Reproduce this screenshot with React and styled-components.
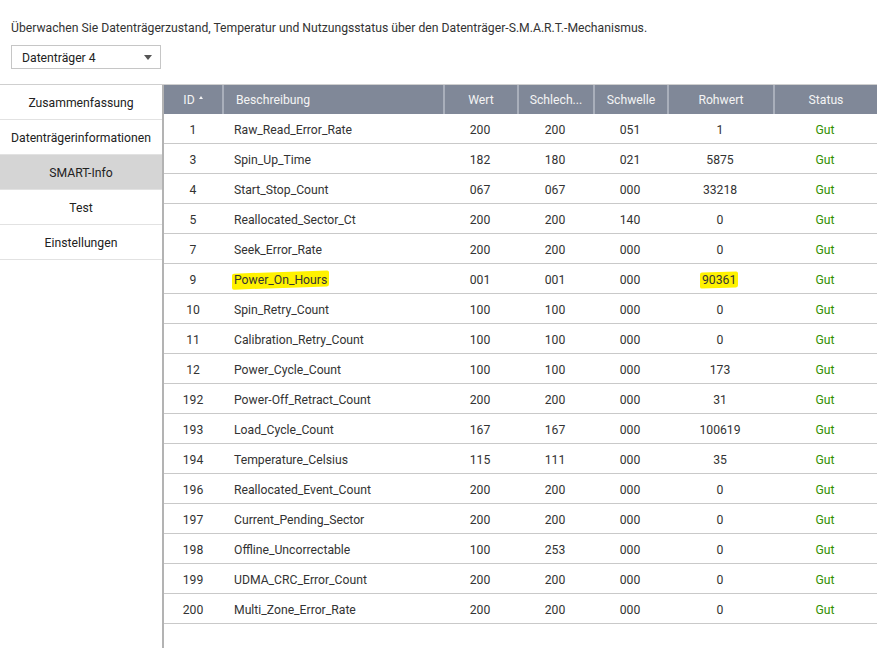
import React from "react";
import styled, { createGlobalStyle } from "styled-components";

const Global = createGlobalStyle`
  html, body { margin: 0; padding: 0; background: #fff; }
  body { font-family: Roboto, "Liberation Sans", sans-serif; font-size: 12.2px; color: #333; }
  * { box-sizing: border-box; }
`;

const Page = styled.div`
  width: 877px;
  height: 648px;
  overflow: hidden;
  display: flex;
  flex-direction: column;
`;

const Intro = styled.div`
  padding: 20px 0 0 11px;
  height: 45px;
  line-height: 16px;
  font-size: 12.2px;
  color: #333;
`;

const Select = styled.div`
  margin-left: 11px;
  width: 150px;
  height: 24px;
  border: 1px solid #c6c6c6;
  display: flex;
  align-items: center;
  justify-content: space-between;
  padding: 1px 8px 0 10px;
  font-size: 12.2px;
  color: #222;
`;

const Caret = styled.span`
  width: 0;
  height: 0;
  border-left: 4px solid transparent;
  border-right: 4px solid transparent;
  border-top: 5px solid #555;
`;

const Body = styled.div`
  margin-top: 15px;
  border-top: 1px solid #cfcfcf;
  display: flex;
  flex: 1;
  min-height: 0;
`;

const Side = styled.div`
  width: 164px;
  border-right: 2px solid #b3b3b3;
  display: flex;
  flex-direction: column;
`;

const SideItem = styled.div`
  height: 35px;
  display: flex;
  align-items: center;
  justify-content: center;
  padding-top: 2px;
  border-bottom: 1px solid #e2e2e2;
  background: ${(p) => (p.$active ? "#d5d5d5" : "#fff")};
  color: #222;
  font-size: 12.2px;
`;

const TableWrap = styled.div`
  flex: 1;
`;

const Grid = styled.div`
  display: grid;
  grid-template-columns: 58px 221px 74px 76px 74px 106px 104px;
`;

const Head = styled.div`
  height: 29px;
  background: #808898;
  color: #f4f4f4;
  display: flex;
  align-items: center;
  justify-content: ${(p) => (p.$left ? "flex-start" : "center")};
  padding-left: ${(p) => (p.$left ? "12px" : "0")};
  padding-top: 1px;
  border-left: ${(p) => (p.$first ? "none" : "2px solid #a9afbb")};
  font-size: 12.2px;
  white-space: nowrap;
`;

const SortUp = styled.span`
  display: inline-block;
  margin-left: 4px;
  margin-top: -5px;
  width: 0;
  height: 0;
  border-left: 2.5px solid transparent;
  border-right: 2.5px solid transparent;
  border-bottom: 3px solid #f4f4f4;
`;

const Cell = styled.div`
  height: 30px;
  border-bottom: 1px solid #c9c9c9;
  display: flex;
  align-items: center;
  justify-content: ${(p) => (p.$left ? "flex-start" : "center")};
  padding-left: ${(p) => (p.$left ? "12px" : "0")};
  padding-top: 2px;
  color: ${(p) => (p.$ok ? "#338f00" : "#333")};
  font-size: 12.2px;
`;

const Mark = styled.span`
  position: relative;
  padding: 1px 2px;
  margin-left: -2px;
  background: #fff200;
  transform: skewY(-2deg);
  border-radius: 2px;
  span { display: inline-block; transform: skewY(2deg); }
`;

const rows = [
  [1, "Raw_Read_Error_Rate", "200", "200", "051", "1"],
  [3, "Spin_Up_Time", "182", "180", "021", "5875"],
  [4, "Start_Stop_Count", "067", "067", "000", "33218"],
  [5, "Reallocated_Sector_Ct", "200", "200", "140", "0"],
  [7, "Seek_Error_Rate", "200", "200", "000", "0"],
  [9, "Power_On_Hours", "001", "001", "000", "90361", true],
  [10, "Spin_Retry_Count", "100", "100", "000", "0"],
  [11, "Calibration_Retry_Count", "100", "100", "000", "0"],
  [12, "Power_Cycle_Count", "100", "100", "000", "173"],
  [192, "Power-Off_Retract_Count", "200", "200", "000", "31"],
  [193, "Load_Cycle_Count", "167", "167", "000", "100619"],
  [194, "Temperature_Celsius", "115", "111", "000", "35"],
  [196, "Reallocated_Event_Count", "200", "200", "000", "0"],
  [197, "Current_Pending_Sector", "200", "200", "000", "0"],
  [198, "Offline_Uncorrectable", "100", "253", "000", "0"],
  [199, "UDMA_CRC_Error_Count", "200", "200", "000", "0"],
  [200, "Multi_Zone_Error_Rate", "200", "200", "000", "0"],
];

const nav = ["Zusammenfassung", "Datenträgerinformationen", "SMART-Info", "Test", "Einstellungen"];

export default function App() {
  return (
    <Page>
      <Global />
      <Intro>
        Überwachen Sie Datenträgerzustand, Temperatur und Nutzungsstatus über den Datenträger-S.M.A.R.T.-Mechanismus.
      </Intro>
      <Select>
        Datenträger 4
        <Caret />
      </Select>
      <Body>
        <Side>
          {nav.map((n) => (
            <SideItem key={n} $active={n === "SMART-Info"}>
              {n}
            </SideItem>
          ))}
        </Side>
        <TableWrap>
          <Grid>
            <Head $first>
              ID<SortUp />
            </Head>
            <Head $left>Beschreibung</Head>
            <Head>Wert</Head>
            <Head>Schlech...</Head>
            <Head>Schwelle</Head>
            <Head>Rohwert</Head>
            <Head>Status</Head>
            {rows.map((r) => (
              <React.Fragment key={r[0]}>
                <Cell>{r[0]}</Cell>
                <Cell $left>
                  {r[6] ? (
                    <Mark>
                      <span>{r[1]}</span>
                    </Mark>
                  ) : (
                    r[1]
                  )}
                </Cell>
                <Cell>{r[2]}</Cell>
                <Cell>{r[3]}</Cell>
                <Cell>{r[4]}</Cell>
                <Cell>
                  {r[6] ? (
                    <Mark>
                      <span>{r[5]}</span>
                    </Mark>
                  ) : (
                    r[5]
                  )}
                </Cell>
                <Cell $ok>Gut</Cell>
              </React.Fragment>
            ))}
          </Grid>
        </TableWrap>
      </Body>
    </Page>
  );
}
